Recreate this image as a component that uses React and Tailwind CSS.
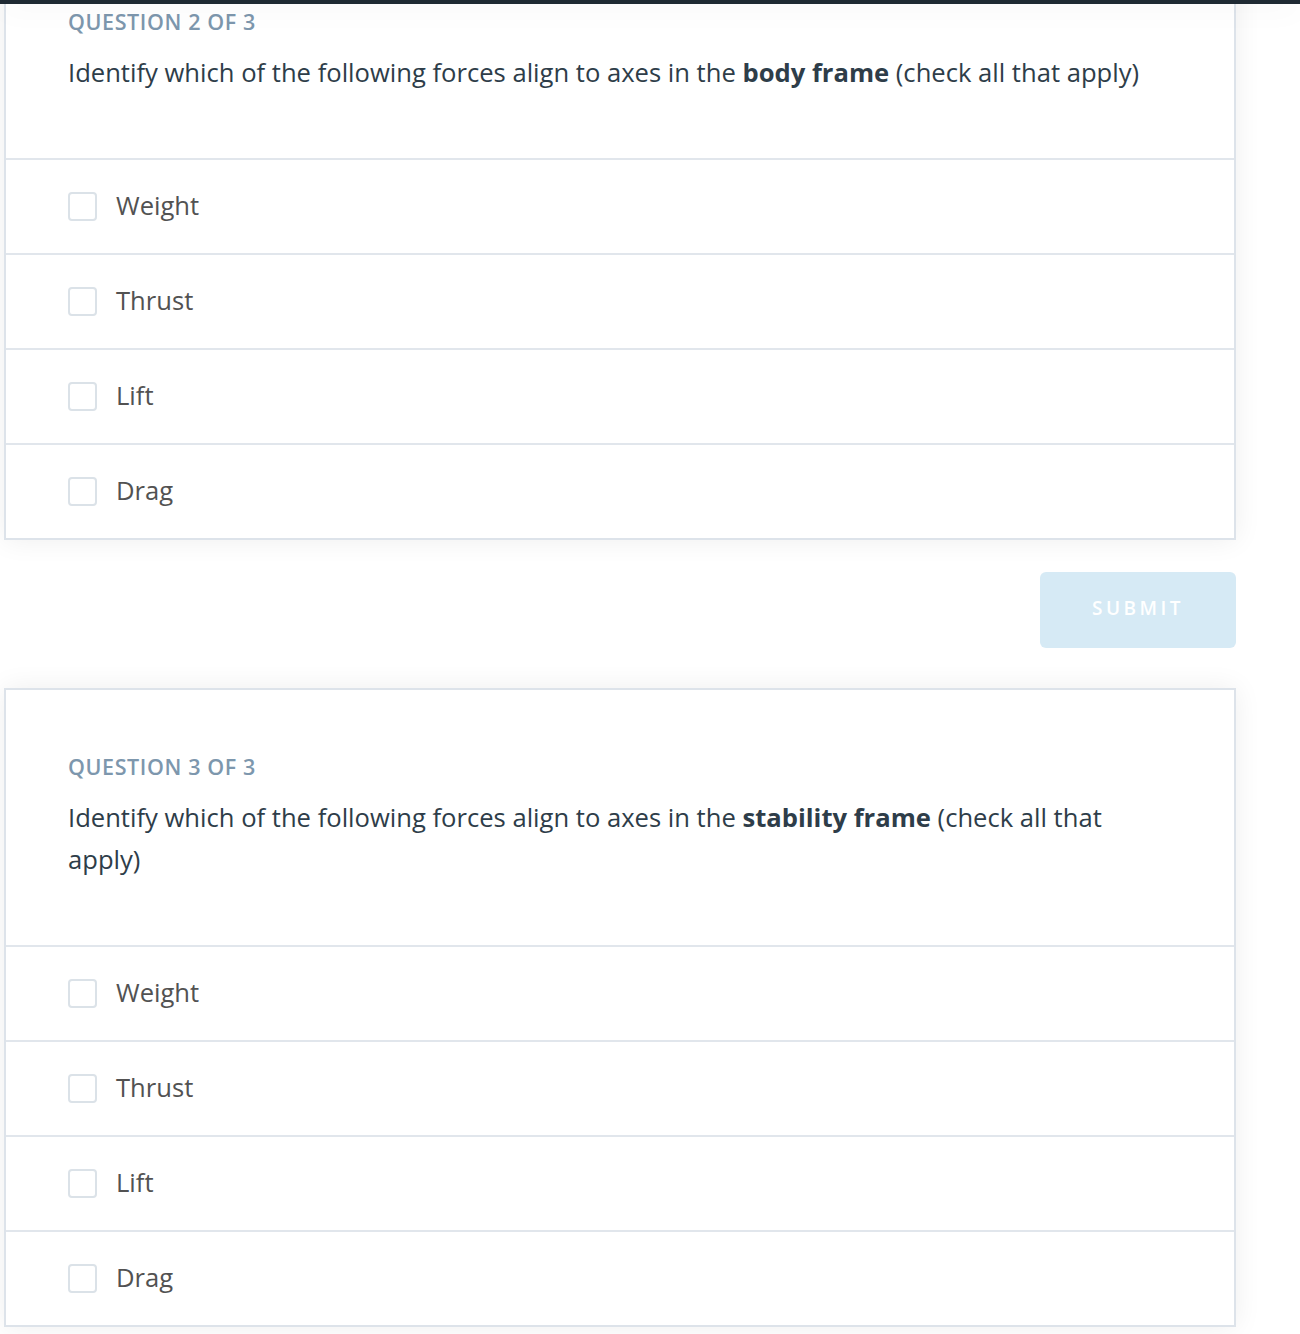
import React, { useState } from 'react';

const OPTIONS = ['Weight', 'Thrust', 'Lift', 'Drag'];

const QUESTIONS = [
  { id: 2, frame: 'body frame' },
  { id: 3, frame: 'stability frame' },
];

const OptionRow = ({ label, checked, onToggle }) => (
  <label className="flex h-[95px] cursor-pointer items-center border-t-2 border-[#e1e6ec] px-[62px]">
    <span
      className={`flex h-[29px] w-[29px] items-center justify-center rounded-[4px] border-2 ${
        checked ? 'border-[#02b3e4] bg-[#02b3e4]' : 'border-[#dbe2e8] bg-white'
      }`}
    >
      {checked && (
        <svg width="16" height="16" viewBox="0 0 16 16" fill="none">
          <path d="M3 8.5l3.2 3L13 4.5" stroke="white" strokeWidth="2.2" strokeLinecap="round" strokeLinejoin="round" />
        </svg>
      )}
    </span>
    <input type="checkbox" className="hidden" checked={checked} onChange={onToggle} />
    <span className="ml-[19px] text-[25.6px] text-[#525252]">{label}</span>
  </label>
);

const QuestionCard = ({ question }) => {
  const [selected, setSelected] = useState([]);

  const toggle = (opt) => {
    setSelected((prev) => (prev.includes(opt) ? prev.filter((o) => o !== opt) : [...prev, opt]));
  };

  return (
    <div className="border-2 border-[#dde3ea] bg-white shadow-[0_0_26px_rgba(0,0,0,0.07)]">
      <div className="px-[62px] pb-[64px] pt-[63px]">
        <p className="text-[21.5px] font-semibold leading-[28px] tracking-[0.6px] text-[#7d97ad]">
          QUESTION {question.id} OF 3
        </p>
        <p className="mt-[16px] text-[25.6px] leading-[42px] text-[#2e3d49]">
          Identify which of the following forces align to axes in the{' '}
          <strong className="font-bold">{question.frame}</strong> (check all that apply)
        </p>
      </div>
      {OPTIONS.map((opt) => (
        <OptionRow key={opt} label={opt} checked={selected.includes(opt)} onToggle={() => toggle(opt)} />
      ))}
    </div>
  );
};

export default function App() {
  return (
    <div className="relative h-[1334px] overflow-hidden bg-white" style={{ fontFamily: '"Open Sans", "Noto Sans", sans-serif' }}>
      {/* sticky nav edge */}
      <div className="fixed left-0 right-0 top-0 z-10 h-[4px] bg-[#1f2a33] shadow-[0_2px_30px_rgba(0,0,0,0.12)]" />

      <div className="-mt-[57px] ml-[4px] mr-[64px]">
        <QuestionCard question={QUESTIONS[0]} />

        <div className="mt-[32px] flex justify-end">
          <button
            disabled
            className="h-[76px] w-[196px] rounded-[6px] bg-[#d6eaf5] pb-[4px] text-[19px] font-semibold tracking-[3.5px] text-white"
          >
            SUBMIT
          </button>
        </div>

        <div className="mt-[40px]">
          <QuestionCard question={QUESTIONS[1]} />
        </div>
      </div>
    </div>
  );
}
